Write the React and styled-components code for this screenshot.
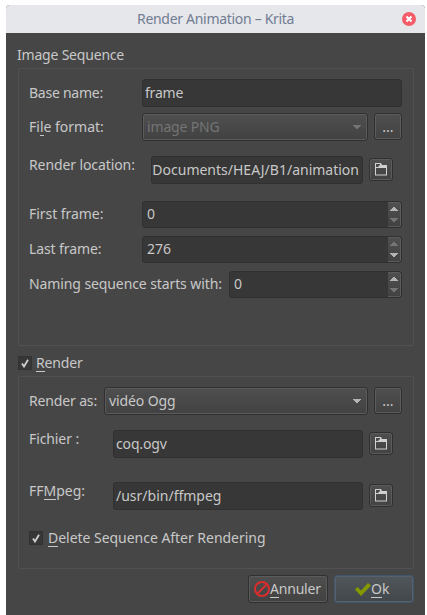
import React from "react";
import styled, { createGlobalStyle, css } from "styled-components";

const GlobalStyle = createGlobalStyle`
  * { box-sizing: border-box; }
  body { margin: 0; background: #fff; font: 14px/20px "Noto Sans", sans-serif; color: #c8c8c8; overflow: hidden; }
`;

const Page = styled.div`
  padding: 5px 2px 0 6px;
  height: 615px;
`;
const Window = styled.main`
  height: 610px;
  display: flex;
  flex-direction: column;
  background: #464646;
  border-radius: 4px 4px 0 0;
  overflow: hidden;
`;
const TitleBar = styled.header`
  height: 28px;
  flex: none;
  display: flex;
  align-items: center;
  justify-content: flex-end;
  padding-right: 9px;
  background: #e5e7eb;
  color: #727c92;
`;
const Title = styled.h1`
  margin: 0 auto 0 131px;
  font-size: 14px;
  font-weight: 400;
  white-space: nowrap;
  letter-spacing: -0.3px;
`;
const Body = styled.div`
  padding: 12px 11px 0 12px;
`;
const Heading = styled.div`
  height: 20px;
  margin: 0 0 3px -1px;
`;
const Group = styled.section`
  height: ${(p) => p.$h}px;
  padding: 10px 11px 0 10px;
  border: 1px solid #515151;
  border-radius: 2px;
`;
const Row = styled.div`
  display: flex;
  align-items: center;
  height: 28px;
  margin-bottom: ${(p) => p.$gap || 0}px;
`;
const Toggle = styled(Row)`
  height: 30px;
  padding-top: 4px;
`;
const Label = styled.label`
  flex: none;
  width: ${(p) => p.$w}px;
  margin-bottom: ${(p) => (p.$raised ? 11 : 0)}px;
  white-space: nowrap;
`;
const Text = styled.span`
  letter-spacing: ${(p) => p.$ls || 0}px;
  white-space: nowrap;
`;
const Key = styled.span`
  display: inline-block;
  height: 19px;
  border-bottom: 1px solid currentColor;
`;
const Field = styled.div`
  display: flex;
  align-items: center;
  width: ${(p) => p.$w}px;
  height: ${(p) => p.$h || 28}px;
  padding-left: ${(p) => p.$pad ?? 2}px;
  background: #373737;
  border: 1px solid #303030;
  border-radius: 3px;
  overflow: hidden;
`;
const Clip = styled.div`
  flex: 1;
  display: flex;
  justify-content: flex-end;
  overflow: hidden;
  margin-right: 3px;
`;
const raised = css`
  border: 1px solid #303030;
  border-radius: 3px;
  box-shadow: inset 0 0 0 1px #5b5b5b;
  background: linear-gradient(#4f4f4f, #424242);
`;
const Combo = styled.div`
  ${raised}
  display: flex;
  align-items: center;
  justify-content: space-between;
  width: ${(p) => p.$w}px;
  height: 28px;
  padding: 0 6px 0 4px;
  color: ${(p) => (p.$disabled ? "#747474" : "#c8c8c8")};
`;
const ToolButton = styled.button`
  ${raised}
  display: flex;
  align-items: center;
  justify-content: center;
  flex: none;
  width: ${(p) => p.$w}px;
  height: ${(p) => p.$h}px;
  margin: 0 0 1px 6px;
  padding: 0;
  color: #c8c8c8;
  font: inherit;
`;
const Steps = styled.div`
  display: flex;
  flex-direction: column;
  align-items: center;
  justify-content: space-between;
  flex: none;
  width: 13px;
  height: 25px;
  margin-left: auto;
  padding: 4px 0;
  background: linear-gradient(#4f4f4f, #424242);
  border: 1px solid #5b5b5b;
  border-left: 0;
  border-radius: 0 2px 2px 0;
`;
const Check = styled.span`
  display: flex;
  align-items: center;
  justify-content: center;
  width: 14px;
  height: 14px;
  margin-right: ${(p) => p.$gap}px;
  background: #373737;
  border: 1px solid #323232;
`;
const Footer = styled.footer`
  display: flex;
  justify-content: flex-end;
  gap: 6px;
  padding-top: 6px;
`;
const Button = styled.button`
  ${raised}
  display: flex;
  align-items: center;
  width: 80px;
  height: 28px;
  padding: 0 0 0 ${(p) => p.$pad}px;
  font: inherit;
  color: #c8c8c8;
  ${(p) =>
    p.$primary &&
    css`
      border-color: #41556b;
      box-shadow: inset 0 0 0 1px #55626e;
      background: linear-gradient(#50565a, #41474b);
    `}
`;

const Arrow = ({ up, color = "#b4b4b4" }) => (
  <svg width="8" height="4" viewBox="0 0 8 4" fill={color}>
    <path d={up ? "M0 4h8v-1h-1v-1h-1v-1h-1v-1h-2v1h-1v1h-1v1h-1z" : "M0 0h8v1h-1v1h-1v1h-1v1h-2v-1h-1v-1h-1v-1h-1z"} />
  </svg>
);
const Folder = () => (
  <svg width="12" height="13" viewBox="0 0 12 13">
    <path d="M0 0h6l1 2h5v10.5H0z M1 1v3h2l2-2V1z M1 5v6.5h10V5z" fill="#d0d0d0" fillRule="evenodd" />
  </svg>
);
const CheckMark = () => (
  <svg width="8" height="9" viewBox="0 0 8 9">
    <path d="M1 4.5L3 7.5L7 .8" fill="none" stroke="#d0d0d0" strokeWidth="1.8" />
  </svg>
);
const Close = () => (
  <svg width="14" height="14" viewBox="0 0 14 14">
    <circle cx="7" cy="7" r="7" fill="#f45c67" />
    <path d="M4.5 4.5l5 5M9.5 4.5l-5 5" stroke="#fff" strokeWidth="2.2" />
  </svg>
);
const Forbid = () => (
  <svg width="16" height="16" viewBox="0 0 16 16" fill="none" stroke="#da2d2d" strokeWidth="2">
    <circle cx="8" cy="8" r="7" />
    <path d="M3 13L13 3" />
  </svg>
);
const Tick = () => (
  <svg width="16" height="13" viewBox="0 0 16 13">
    <path d="M0 6.5L2.5 4L6 7.5L13 0L16 2.5L6 13z" fill="#859900" />
  </svg>
);

const Spin = ({ w, value, upOff, downOff }) => (
  <Field $w={w} $h={27} $pad={4}>
    <Text>{value}</Text>
    <Steps>
      <Arrow up color={upOff ? "#757575" : "#b4b4b4"} />
      <Arrow color={downOff ? "#757575" : "#b4b4b4"} />
    </Steps>
  </Field>
);
const Browse = () => (
  <ToolButton $w={24} $h={23}><Folder /></ToolButton>
);
const More = () => (
  <ToolButton $w={28} $h={27}>...</ToolButton>
);

export default function App() {
  return (
    <Page>
      <GlobalStyle />
      <Window>
        <TitleBar>
          <Title>Render Animation – Krita</Title>
          <Close />
        </TitleBar>
        <Body>
          <Heading><Text $ls={-0.2}>Image Sequence</Text></Heading>
          <Group $h={278}>
            <Row $gap={6}>
              <Label $w={113}><Text $ls={-0.25}>Base name:</Text></Label>
              <Field $w={260}><Text $ls={-0.2}>frame</Text></Field>
            </Row>
            <Row $gap={15}>
              <Label $w={113}><Text>Fi<Key>l</Key>e format:</Text></Label>
              <Combo $w={226} $disabled><Text $ls={-0.15}>image PNG</Text><Arrow color="#747474" /></Combo>
              <More />
            </Row>
            <Row $gap={16}>
              <Label $w={122} $raised><Text $ls={-0.1}>Render location:</Text></Label>
              <Field $w={212} $pad={0}><Clip><Text>/Documents/HEAJ/B1/animation</Text></Clip></Field>
              <Browse />
            </Row>
            <Row $gap={7}>
              <Label $w={113}><Text $ls={-0.05}>First frame:</Text></Label>
              <Spin w={260} value="0" downOff />
            </Row>
            <Row $gap={7}>
              <Label $w={113}><Text $ls={-0.1}>Last frame:</Text></Label>
              <Spin w={260} value="276" upOff />
            </Row>
            <Row>
              <Label $w={200}><Text $ls={-0.1}>Naming sequence starts with:</Text></Label>
              <Spin w={173} value="0" downOff />
            </Row>
          </Group>
          <Toggle><Check $gap={4}><CheckMark /></Check><Text $ls={-0.15}><Key>R</Key>ender</Text></Toggle>
          <Group $h={193}>
            <Row $gap={15}>
              <Label $w={75}><Text $ls={-0.15}>Render as:</Text></Label>
              <Combo $w={264}><Text $ls={-0.1}>vidéo Ogg</Text><Arrow /></Combo>
              <More />
            </Row>
            <Row $gap={24}>
              <Label $w={84} $raised><Text $ls={-0.1}>Fichier :</Text></Label>
              <Field $w={250}><Text $ls={-0.15}>coq.ogv</Text></Field>
              <Browse />
            </Row>
            <Row $gap={14}>
              <Label $w={84} $raised><Text>FF<Key>M</Key>peg:</Text></Label>
              <Field $w={250}><Text>/usr/bin/ffmpeg</Text></Field>
              <Browse />
            </Row>
            <Row><Check $gap={5}><CheckMark /></Check><Text $ls={-0.03}><Key>D</Key>elete Sequence After Rendering</Text></Row>
          </Group>
          <Footer>
            <Button $pad={5}><Forbid /><Text $ls={-0.2}><Key>A</Key>nnuler</Text></Button>
            <Button $pad={20} $primary><Tick /><Text><Key>O</Key>k</Text></Button>
          </Footer>
        </Body>
      </Window>
    </Page>
  );
}
